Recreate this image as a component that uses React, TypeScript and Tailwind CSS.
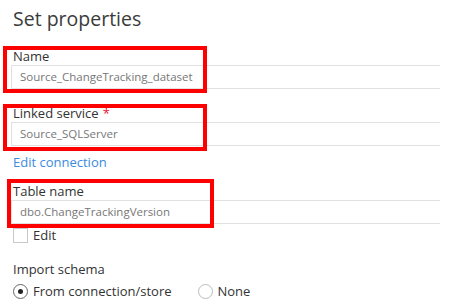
import React from 'react'

function Field({ label, value, required }: { label: string; value: string; required?: boolean }) {
  return (
    <div>
      <div className="pl-[2px] text-[13px] leading-[18px] text-[#333]">
        {label}
        {required && <span className="ml-[4px] text-[#e81123]">*</span>}
      </div>
      <div className="flex h-[24px] items-center border border-r-0 border-[#e1e1e1] pl-[8px] text-[11.5px] text-[#777]">
        {value}
      </div>
    </div>
  )
}

export default function App() {
  return (
    <div className="relative h-[300px] w-[449px] overflow-hidden bg-white font-['Open_Sans',sans-serif]">
      <div className="pl-[11px] pr-[9px]">
        <h1 className="mt-[5px] pl-[2px] text-[19.5px] leading-[28px] text-[#3b3b3b]">Set properties</h1>

        <div className="mt-[14px]">
          <Field label="Name" value="Source_ChangeTracking_dataset" />
        </div>

        <div className="mt-[15px]">
          <Field label="Linked service" value="Source_SQLServer" required />
        </div>

        <div className="mt-[7px] pl-[2px] text-[13px] leading-[18px] text-[#3a8ae0]">Edit connection</div>

        <div className="mt-[11px]">
          <Field label="Table name" value="dbo.ChangeTrackingVersion" />
        </div>

        <div className="mt-[4px] flex items-center gap-[5px] pl-[2px] text-[13px] leading-[15px] text-[#333]">
          <span className="h-[15px] w-[15px] border border-[#c8c8c8] bg-white" />
          Edit
        </div>

        <div className="mt-[17px] pl-[2px] text-[13px] leading-[18px] text-[#333]">Import schema</div>

        <div className="mt-[6px] flex items-center pl-[2px] text-[13px] leading-[15px] text-[#333]">
          <span className="flex h-[15px] w-[15px] items-center justify-center rounded-full border border-[#666]">
            <span className="h-[5px] w-[5px] rounded-full bg-[#222]" />
          </span>
          <span className="ml-[5px]">From connection/store</span>
          <span className="ml-[26px] h-[15px] w-[15px] rounded-full border border-[#bbb]" />
          <span className="ml-[5px]">None</span>
        </div>
      </div>

      {/* red highlight boxes */}
      <div className="absolute left-[3px] top-[46px] h-[47px] w-[204px] border-4 border-[#f00]" />
      <div className="absolute left-[3px] top-[104px] h-[47px] w-[204px] border-4 border-[#f00]" />
      <div className="absolute left-[7px] top-[179px] h-[49px] w-[207px] border-4 border-[#f00]" />
    </div>
  )
}
